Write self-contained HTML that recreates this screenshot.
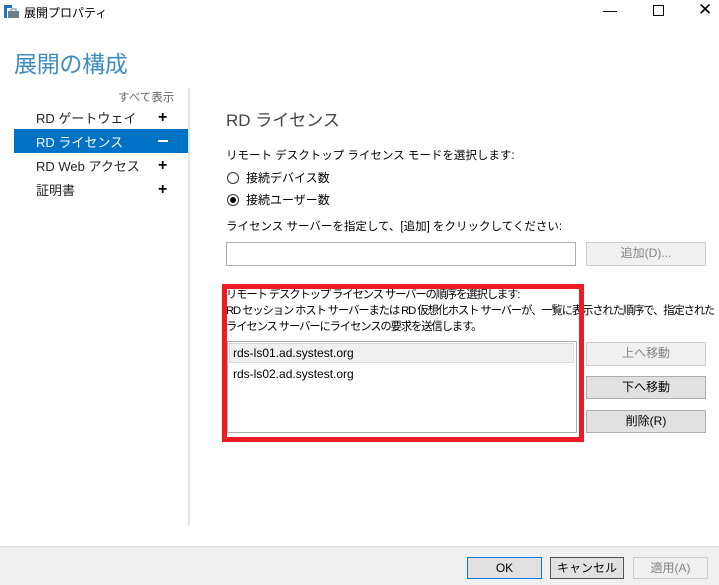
<!DOCTYPE html>
<html><head><meta charset="utf-8"><style>
*{margin:0;padding:0;box-sizing:border-box}
body{width:719px;height:585px;background:#fff;position:relative;overflow:hidden;font-family:"Liberation Sans","Noto Sans CJK JP",sans-serif;font-size:12px;color:#000}
.a{position:absolute;white-space:nowrap}
.btn{position:absolute;border:1px solid #adadad;background:#e1e1e1;text-align:center;line-height:20px;font-size:12px}
.dis{background:#f0f0f0;border-color:#ccc;color:#838383}
</style></head><body>
<svg class="a" style="left:4px;top:5px" width="16" height="14"><rect x="0" y="0" width="3" height="13" fill="#1e73be"/><rect x="0" y="0" width="8" height="3" fill="#1e73be"/><rect x="4" y="6" width="11" height="7" fill="#6d7f8f"/><rect x="7" y="4" width="5" height="3" fill="none" stroke="#6d7f8f"/></svg>
<div class="a" style="left:24px;top:4px;font-size:12px">展開プロパティ</div>
<div class="a" style="left:603px;top:2px;font-size:14px">—</div>
<div class="a" style="left:653px;top:5px;width:11px;height:11px;border:1px solid #000"></div>
<div class="a" style="left:698px;top:0px;font-size:17px">✕</div>
<div class="a" style="left:14px;top:45px;font-size:23px;color:#3d8cc6;letter-spacing:-0.3px">展開の構成</div>
<div class="a" style="left:118px;top:89px;font-size:11.5px;color:#666">すべて表示</div>
<div class="a" style="left:36px;top:108px;font-size:13px;color:#222">RD ゲートウェイ</div>
<div class="a" style="left:158px;top:109px;font-size:16px;font-weight:bold">+</div>
<div class="a" style="left:14px;top:129px;width:174px;height:24px;background:#0072c6"></div>
<div class="a" style="left:36px;top:132px;font-size:13px;color:#fff">RD ライセンス</div>
<div class="a" style="left:158px;top:140px;width:10px;height:2px;background:#fff"></div>
<div class="a" style="left:36px;top:156px;font-size:13px;color:#222">RD Web アクセス</div>
<div class="a" style="left:158px;top:157px;font-size:16px;font-weight:bold">+</div>
<div class="a" style="left:36px;top:180px;font-size:13px;color:#222">証明書</div>
<div class="a" style="left:158px;top:181px;font-size:16px;font-weight:bold">+</div>
<div class="a" style="left:188px;top:88px;width:2px;height:437px;background:#e3e3e3"></div>
<div class="a" style="left:226px;top:106px;font-size:17px;color:#444">RD ライセンス</div>
<div class="a" style="left:226px;top:147px;font-size:11.5px">リモート デスクトップ ライセンス モードを選択します:</div>
<div class="a" style="left:227px;top:172px;width:12px;height:12px;border:1px solid #333;border-radius:50%"></div>
<div class="a" style="left:246px;top:169px">接続デバイス数</div>
<div class="a" style="left:227px;top:194px;width:12px;height:12px;border:1px solid #333;border-radius:50%"><div style="margin:2px;width:6px;height:6px;border-radius:50%;background:#000"></div></div>
<div class="a" style="left:246px;top:191px">接続ユーザー数</div>
<div class="a" style="left:226px;top:218px;font-size:11.5px">ライセンス サーバーを指定して、[追加] をクリックしてください:</div>
<div class="a" style="left:226px;top:242px;width:350px;height:24px;border:1px solid #adadad"></div>
<div class="btn dis" style="left:586px;top:242px;width:120px;height:24px">追加(D)...</div>
<div class="a" style="left:226px;top:287px;line-height:16px;font-size:11.3px;letter-spacing:-1.1px">リモート デスクトップ ライセンス サーバーの順序を選択します:<br>RD セッション ホスト サーバーまたは RD 仮想化ホスト サーバーが、一覧に表示された順序で、指定された<br>ライセンス サーバーにライセンスの要求を送信します。</div>
<div class="a" style="left:227px;top:341px;width:350px;height:92px;border:1px solid #adadad"></div>
<div class="a" style="left:229px;top:343px;width:345px;height:20px;background:#f0f0f0;border:1px solid #dadada"></div>
<div class="a" style="left:233px;top:346px">rds-ls01.ad.systest.org</div>
<div class="a" style="left:233px;top:367px">rds-ls02.ad.systest.org</div>
<div class="btn dis" style="left:586px;top:342px;width:120px;height:24px">上へ移動</div>
<div class="btn" style="left:586px;top:376px;width:120px;height:23px">下へ移動</div>
<div class="btn" style="left:586px;top:410px;width:120px;height:23px">削除(R)</div>
<div class="a" style="left:222px;top:284px;width:362px;height:158px;border:5px solid #ed1c24"></div>
<div class="a" style="left:0;top:546px;width:719px;height:39px;background:#f0f0f0;border-top:1px solid #dfdfdf"></div>
<div class="btn" style="left:467px;top:557px;width:75px;height:22px;border:1px solid #0078d7">OK</div>
<div class="btn" style="left:550px;top:557px;width:74px;height:22px;border:1px solid #555">キャンセル</div>
<div class="btn dis" style="left:633px;top:557px;width:75px;height:22px">適用(A)</div>
</body></html>
